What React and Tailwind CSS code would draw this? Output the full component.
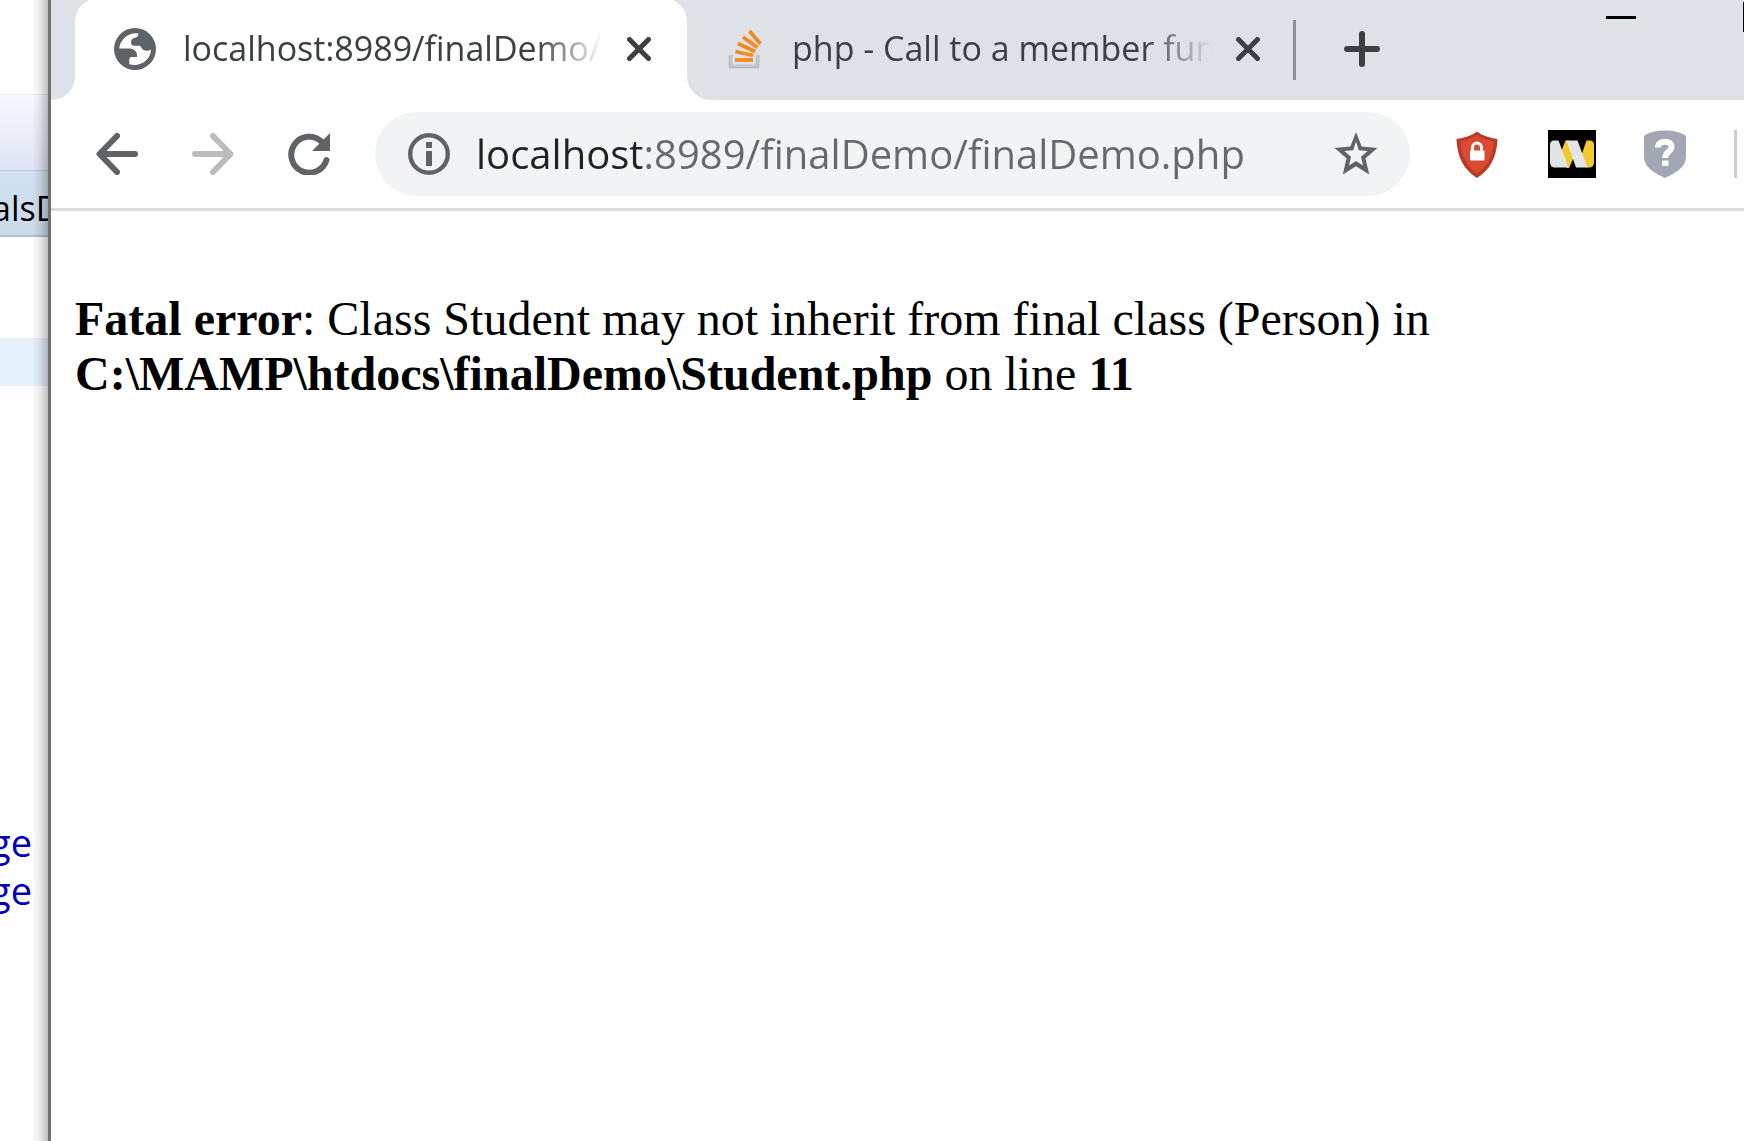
const iconButton = "flex shrink-0 items-center justify-center";

function Globe() {
  return (
    <svg viewBox="0 0 42 42" className="h-[42px] w-[42px] shrink-0" aria-hidden="true">
      <circle cx="21" cy="21" r="21" fill="#5f6368" />
      <path
        d="M24.500 5.500C15 3.600 6 11.500 5.200 20.500H16C19.800 20.500 23 23.500 23 27.200V29H17.500C16 29 15.300 30 15.300 31.500V36.300C26 39.500 36.800 32 37 21.500C35 22.800 32 23.400 29 21.800L26 17.800H20.500C18 17.800 17 16.800 17 14.800C17 11.800 18.500 10.200 21 9.800C23 9.500 24.300 8 24.500 5.500Z"
        fill="#fff"
      />
    </svg>
  );
}

function StackOverflow() {
  return (
    <svg viewBox="0 0 42 42" className="h-[42px] w-[42px] shrink-0" fill="none" aria-hidden="true">
      <path d="M4.500 27V38.500H31.500V27" stroke="#b5b8bf" strokeWidth="3.500" />
      <path d="M4.800 27V38H31.200V27" stroke="#d0d2d6" strokeWidth="1" />
      <g stroke="#f48a1f" strokeWidth="3.800">
        <path d="M9 32H27" />
        <path d="M9.500 23.500L27 27.500" />
        <path d="M12 15.500L29 23.500" />
        <path d="M17 9L31.500 19.500" />
        <path d="M23.500 3L34.500 16" />
      </g>
    </svg>
  );
}

function Close() {
  return (
    <svg viewBox="0 0 24 24" className="h-6 w-6" aria-hidden="true">
      <path d="M2.500 2.500L21.500 21.500M21.500 2.500L2.500 21.500" stroke="#3c4043" strokeWidth="5" strokeLinecap="round" />
    </svg>
  );
}

function Arrow({ className }) {
  return (
    <svg viewBox="0 0 42 42" className={className} fill="none" stroke="currentColor" aria-hidden="true">
      <path d="M39 21H4M21 3L3.500 21L21 39" strokeWidth="6" strokeLinecap="round" strokeLinejoin="round" />
    </svg>
  );
}

function Reload() {
  return (
    <svg viewBox="0 0 42 42" className="h-[42px] w-[42px]" aria-hidden="true">
      <path d="M33.500 8.500A18 18 0 1 0 38.500 27" fill="none" stroke="#5f6368" strokeWidth="6" strokeLinecap="round" />
      <path d="M42 0V18H24Z" fill="#5f6368" />
    </svg>
  );
}

function Info() {
  return (
    <svg viewBox="0 0 42 42" className="h-[42px] w-[42px]" aria-hidden="true">
      <circle cx="21" cy="21" r="18.800" fill="none" stroke="#5f6368" strokeWidth="4.400" />
      <path d="M18 9H24V15H18ZM18 18H24V33H18Z" fill="#5f6368" />
    </svg>
  );
}

function Star() {
  return (
    <svg viewBox="0 0 54 54" className="h-[54px] w-[54px]" aria-hidden="true">
      <path
        fillRule="evenodd"
        d="M27 5L32.600 19.600L48.500 21L36.500 31.300L40.200 47.500L27 39.200L13.800 47.500L17.500 31.300L5.500 21L21.400 19.600ZM27 14.500L24.200 23.200L15.300 24L22 29.800L20 38.600L27 34L34 38.600L32 29.800L38.700 24L29.800 23.200Z"
        fill="#5f6368"
      />
    </svg>
  );
}

function LockShield() {
  return (
    <svg viewBox="0 0 48 48" className="h-12 w-12" aria-hidden="true">
      <path d="M25 1.500C31 6 38 8 45.500 9C45 27 38 40 25 48C12 40 5 27 4.500 9C12 8 19 6 25 1.500Z" fill="#b93a29" />
      <path d="M25 5C30 8.500 35.500 10.500 41.500 11.500C41 26 35 37 25 43.500C15 37 9 26 8.500 11.500C14.500 10.500 20 8.500 25 5Z" fill="#dc4a33" />
      <path d="M20.500 22V17.500A4.500 4.500 0 0 1 29.500 17.500V22" fill="none" stroke="#fff" strokeWidth="3" />
      <rect x="18" y="20.500" width="14.500" height="10" rx="1" fill="#fff" />
    </svg>
  );
}

function WLogo() {
  return (
    <svg viewBox="0 0 48 48" className="h-12 w-12" aria-hidden="true">
      <path d="M0 0H48V48H0Z" fill="#000" />
      <path d="M17.500 10.500H21L26 27L21 38H19L13 22Z" fill="#f4c92f" />
      <path d="M38.500 10.500H42Q46 10.500 46 15V32Q46 37.500 41 37.500H38L33.500 25Z" fill="#f4c92f" />
      <path d="M2 15Q2 10.500 6 10.500H10.500L20.500 37.500H7Q2 37.500 2 32Z" fill="#e3e4e6" />
      <path d="M18.500 10.500H29.500L39.500 37.500H28Z" fill="#e3e4e6" />
    </svg>
  );
}

function QuestionShield() {
  return (
    <svg viewBox="0 0 48 48" className="h-12 w-12" aria-hidden="true">
      <path d="M0 6C8 -1.500 34 -1.500 42 6V26C42 38 31 43 21 48C11 43 0 38 0 26Z" fill="#a2a7b4" />
      <path d="M14 17.500C14 9.500 28 10 27.500 17C27 22 21.300 21.500 21.300 28" fill="none" stroke="#fff" strokeWidth="6" />
      <path d="M18 30.500H24.500V36H18Z" fill="#fff" />
    </svg>
  );
}

function EditorSliver() {
  return (
    <aside className="relative w-12 shrink-0 overflow-hidden bg-white">
      <div className="h-[94px]" />
      <div className="h-[77px] border-y border-t-[#ececec] border-b-[#c3c7cf] bg-linear-to-b from-[#f7f9fe] to-[#dfe3f4]" />
      <div className="flex h-[66px] items-end border-b-2 border-[#b4bdd3] bg-linear-to-b from-[#d2e1f0] to-[#cbdbec]">
        <span className="-ml-2 text-[34px] leading-[54px] text-black">alsD</span>
      </div>
      <div className="mt-[101px] h-12 bg-[#e6f1fe]" />
      <div className="mt-[432px] pr-4 text-[38px] leading-[48px] font-medium text-[#0000c0]">
        <div className="flex justify-end">ge</div>
        <div className="flex justify-end">ge</div>
      </div>
      <div className="absolute inset-y-0 right-0 w-4 bg-linear-to-r from-black/0 via-black/8 to-black/25" />
    </aside>
  );
}

function TabStrip() {
  return (
    <div className="flex h-[100px] overflow-hidden bg-white text-[34px] leading-[44px] text-[#3c4043]">
      <div className="w-6 shrink-0 rounded-br-3xl bg-[#dee1e6]" />
      <div className="flex w-[612px] bg-[#dee1e6]">
        <div className="-mt-0.5 flex min-w-0 flex-1 items-center rounded-t-3xl bg-white pt-0.5 pr-9 pb-0.5 pl-[39px]">
          <Globe />
          <span className="ml-[27px] min-w-0 flex-1 overflow-hidden mask-r-from-84% pb-0.5 whitespace-nowrap">
            localhost:8989/finalDemo/
          </span>
          <button aria-label="Close tab" className={`${iconButton} ml-6`}>
            <Close />
          </button>
        </div>
      </div>
      <div className="flex min-w-0 flex-1 rounded-bl-3xl bg-[#dee1e6]">
        <div className="flex w-[609px] items-center pb-0.5 pl-[39px]">
          <StackOverflow />
          <span className="ml-[24px] min-w-0 flex-1 overflow-hidden mask-r-from-84% pb-0.5 whitespace-nowrap">
            php - Call to a member function
          </span>
          <button aria-label="Close tab" className={`${iconButton} mr-[33px] ml-6`}>
            <Close />
          </button>
          <div className="mt-0.5 h-[60px] w-[3px] bg-[#8d9196]" />
        </div>
        <button aria-label="New tab" className={`${iconButton} ml-12 pb-0.5`}>
          <svg viewBox="0 0 36 36" className="h-9 w-9" aria-hidden="true">
            <path d="M18 3V33M3 18H33" stroke="#3c4043" strokeWidth="6" strokeLinecap="round" />
          </svg>
        </button>
        <div className="ml-auto flex items-start">
          <button aria-label="Minimize" className="mr-[107px] flex h-9 w-[30px] items-start pt-4">
            <span className="block h-[3px] w-full bg-black" />
          </button>
          <button aria-label="Maximize" className="flex h-8 w-px pt-0.5">
            <span className="block h-full w-full bg-black" />
          </button>
        </div>
      </div>
    </div>
  );
}

function Toolbar() {
  return (
    <div className="flex h-[111px] items-center border-b-[3px] border-[#dadce0] pr-[7px] pl-[45px]">
      <div className="flex gap-[54px]">
        <button aria-label="Back" className={iconButton}>
          <Arrow className="h-[42px] w-[42px] text-[#5f6368]" />
        </button>
        <button aria-label="Forward" disabled className={iconButton}>
          <Arrow className="h-[42px] w-[42px] -scale-x-100 text-[#babcbe]" />
        </button>
        <button aria-label="Reload" className={iconButton}>
          <Reload />
        </button>
      </div>
      <form className="ml-[45px] flex h-[84px] min-w-0 flex-1 items-center rounded-full bg-[#f1f3f4] pr-[27px] pl-[33px]">
        <button type="button" aria-label="Site information" className={iconButton}>
          <Info />
        </button>
        <input
          aria-label="Address"
          defaultValue="localhost:8989/finalDemo/finalDemo.php"
          className="ml-[26px] h-[60px] min-w-0 flex-1 bg-linear-to-r from-[#202124] from-[166px] to-[#65696d] to-[166px] bg-clip-text text-[40px] text-transparent outline-none"
        />
        <button type="button" aria-label="Bookmark this page" className={iconButton}>
          <Star />
        </button>
      </form>
      <div className="ml-[42px] flex gap-12">
        <button aria-label="Lock shield extension" className={iconButton}>
          <LockShield />
        </button>
        <button aria-label="W extension" className={iconButton}>
          <WLogo />
        </button>
        <button aria-label="Question shield extension" className={iconButton}>
          <QuestionShield />
        </button>
      </div>
      <div className="ml-[42px] h-12 w-[3px] bg-[#ccced2]" />
    </div>
  );
}

export default function App() {
  return (
    <div className="flex min-h-screen overflow-hidden bg-white font-['Open_Sans',sans-serif]">
      <EditorSliver />
      <div className="min-w-0 flex-1 border-l-[3px] border-[#707372] bg-white">
        <TabStrip />
        <Toolbar />
        <main className="px-6 pt-20 font-['Liberation_Serif',serif] text-[48px] leading-[55px] text-black">
          <p>
            <b>Fatal error</b>: Class Student may not inherit from final class (Person) in{" "}
            <b>C:\MAMP\htdocs\finalDemo\Student.php</b> on line <b>11</b>
          </p>
        </main>
      </div>
    </div>
  );
}
